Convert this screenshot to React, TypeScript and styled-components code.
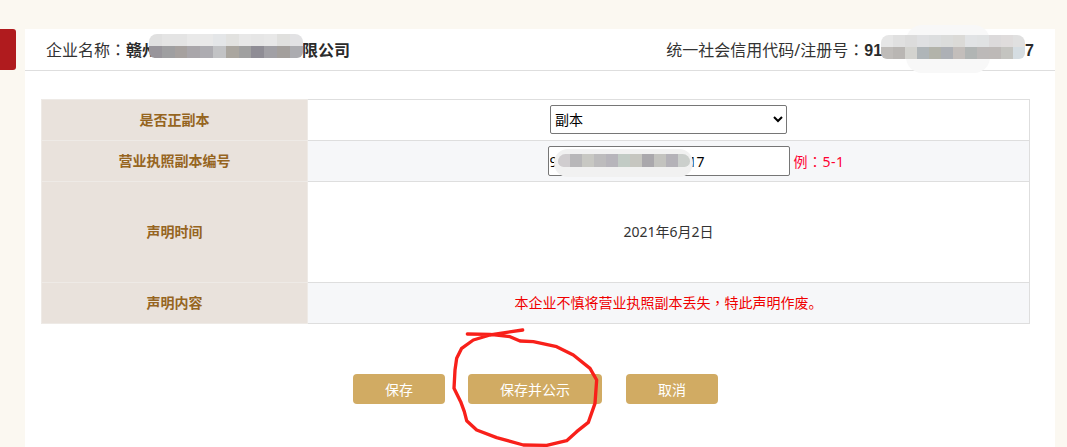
import React from "react";
import styled, { createGlobalStyle } from "styled-components";

const nameCells = [
  ["#e0e0e0", "#e4e4e4", "#e4e4e4", "#e9e9e9", "#e9e9e9", "#e4e6e8", "#e2e2e0", "#e8e8e8", "#e6e6e6", "#e8e8e8", "#e0e0de", "#e2e2e4"],
  ["#98959b", "#9f9fa1", "#a6a19f", "#a9a6aa", "#adacb1", "#c2c3c5", "#aaa69f", "#a0a0a0", "#8f8d95", "#a1a0a5", "#a39f9c", "#acacb0"],
];
const codeCells = [
  ["#e6e6e6", "#e0e0e0", "#dcdcdc", "#dfe0e2", "#dcdedf", "#dbdcdb", "#dbdad7", "#e1e3e5", "#e0e2e3", "#dcdadb", "#dfdcdc", "#e0e0e0"],
  ["#bfbcb9", "#b9b6b3", "#d3d3cf", "#afb5b8", "#b2b3aa", "#adb0b5", "#c3bebb", "#b1b5b4", "#bcb9b8", "#bdb9b7", "#c4c4c0", "#d5dde2"],
];
const inputCells = [
  ["#d0cdcf", "#b8b7b9", "#c8c8c3", "#bdbcbd", "#b7b5bb", "#c2cbc5", "#c6c6c0", "#aaa8ac", "#c3c3bf", "#b4b2b8", "#cbcfcc"],
];

export default function App() {
  return (
    <>
      <PageStyle />
      <Page>
        <SideTab />
        <Card>
          <Header>
            <HeaderItem>
              企业名称<Punct>：</Punct>
              <Strong>
                赣州
                <Hidden $width={144} />
                限公司
                <Mosaic $left={23} $top={-8} $cell={12.8} $height={12}>
                  <MosaicGrid cells={nameCells} />
                </Mosaic>
              </Strong>
            </HeaderItem>
            <HeaderItem>
              统一社会信用代码/注册号<Punct>：</Punct>
              <Strong>
                91
                <Hidden $width={143} />
                7
                <Smudge $left={42} $top={-17} $width={84} $height={48} $tone="#f8f8f8" />
                <Mosaic $left={17} $top={-7} $cell={12} $height={12}>
                  <MosaicGrid cells={codeCells} />
                </Mosaic>
              </Strong>
            </HeaderItem>
          </Header>
          <Body>
            <FormTable>
              <tbody>
                <tr>
                  <LabelCell>是否正副本</LabelCell>
                  <ValueCell>
                    <TypeSelect defaultValue="副本">
                      <option>正本</option>
                      <option>副本</option>
                    </TypeSelect>
                  </ValueCell>
                </tr>
                <tr>
                  <LabelCell>营业执照副本编号</LabelCell>
                  <ValueCell $shaded>
                    <InputRow>
                      <InputWrap>
                        <NumberInput readOnly value="9                                    17" />
                        <Smudge $left={6} $top={3} $width={139} $height={28} $tone="#f1f1f1" />
                        <Mosaic $left={10} $top={8} $cell={12} $height={13}>
                          <MosaicGrid cells={inputCells} />
                        </Mosaic>
                      </InputWrap>
                      <Hint>
                        例<Punct>：</Punct>5-1
                      </Hint>
                    </InputRow>
                  </ValueCell>
                </tr>
                <tr>
                  <LabelCell $tall>声明时间</LabelCell>
                  <ValueCell>2021年6月2日</ValueCell>
                </tr>
                <tr>
                  <LabelCell>声明内容</LabelCell>
                  <ValueCell $shaded $red>
                    本企业不慎将营业执照副本丢失<Punct>，</Punct>特此声明作废。
                  </ValueCell>
                </tr>
              </tbody>
            </FormTable>
            <Actions>
              <ActionButton $width={92}>保存</ActionButton>
              <ActionButton $width={134} $after={1}>
                保存并公示
              </ActionButton>
              <ActionButton $width={92}>取消</ActionButton>
            </Actions>
          </Body>
        </Card>
        <Scribble viewBox="0 0 1200 471">
          <path d="M578 120 L530 127 L480 135 L430 150 L395 175 L380 205 L375 240 L372 295 L392 335 L403 365 L410 392 L440 420 L500 443 L580 465 L650 466 L710 452 L740 425 L775 397 L795 340 L800 270 L780 235 L730 195 L680 170 L610 155 L570 153 L540 140 L480 133 L412 132" />
        </Scribble>
      </Page>
    </>
  );
}

function MosaicGrid({ cells }: { cells: string[][] }) {
  return (
    <>
      {cells.map((row, r) => (
        <MosaicRow key={r}>
          {row.map((colour, c) => (
            <MosaicCell key={c} $colour={colour} />
          ))}
        </MosaicRow>
      ))}
    </>
  );
}

const PageStyle = createGlobalStyle`
  html,
  body {
    margin: 0;
    padding: 0;
    height: 100%;
    overflow: hidden;
    background: #fbf8f1;
  }
  body {
    font-family: "Noto Sans", "Noto Sans CJK SC", sans-serif;
    font-size: 14px;
    color: #333;
  }
`;

const Page = styled.div`
  position: relative;
  display: flex;
  align-items: flex-start;
  height: 447px;
  padding: 29px 12px 0 0;
  box-sizing: border-box;
  overflow: hidden;
`;

const SideTab = styled.div`
  flex: none;
  width: 16px;
  height: 41px;
  margin-right: 9px;
  background: #b01b1e;
  border-radius: 0 3px 3px 0;
`;

const Card = styled.div`
  flex: 1;
  height: 418px;
  background: #fff;
`;

const Header = styled.div`
  display: flex;
  justify-content: space-between;
  align-items: center;
  height: 42px;
  padding: 0 21px 1px 21px;
  box-sizing: border-box;
  border-bottom: 1px solid #dedede;
  font-size: 16px;
  color: #333;
`;

const HeaderItem = styled.div`
  white-space: nowrap;
`;

/* full-width punctuation sits mid-cell in the reference */
const Punct = styled.span`
  font-family: "Noto Sans CJK TC", sans-serif;
`;

const Strong = styled.strong`
  position: relative;
  font-family: "Liberation Sans", "Noto Sans CJK SC", sans-serif;
  color: #2b2b2b;
`;

const Hidden = styled.span<{ $width: number }>`
  display: inline-block;
  width: ${(p) => p.$width}px;
`;

const Mosaic = styled.span<{ $left: number; $top: number; $cell: number; $height: number }>`
  position: absolute;
  left: ${(p) => p.$left}px;
  top: ${(p) => p.$top}px;
  display: flex;
  flex-direction: column;
  border-radius: 8px 8px 6px 6px;
  overflow: hidden;
  --cell: ${(p) => p.$cell}px;
  --row: ${(p) => p.$height}px;
`;

const MosaicRow = styled.span`
  display: flex;
`;

const MosaicCell = styled.span<{ $colour: string }>`
  width: var(--cell);
  height: var(--row);
  background: ${(p) => p.$colour};
`;

const Smudge = styled.span<{ $left: number; $top: number; $width: number; $height: number; $tone: string }>`
  position: absolute;
  left: ${(p) => p.$left}px;
  top: ${(p) => p.$top}px;
  width: ${(p) => p.$width}px;
  height: ${(p) => p.$height}px;
  background: ${(p) => p.$tone};
  border-radius: 16px;
`;

const Body = styled.div`
  padding: 28px 25px 0 16px;
`;

const FormTable = styled.table`
  width: 989px;
  border-collapse: collapse;
  table-layout: fixed;
`;

const LabelCell = styled.td<{ $tall?: boolean }>`
  width: 265px;
  height: ${(p) => (p.$tall ? 98 : 38)}px;
  padding: 0 0 2px;
  text-align: center;
  font-weight: bold;
  color: #96651f;
  background: #e9e2dc;
  border: 1px solid #eeeae6;
`;

const ValueCell = styled.td<{ $shaded?: boolean; $red?: boolean }>`
  padding: 0 0 2px;
  text-align: center;
  color: ${(p) => (p.$red ? "#f00000" : "#333")};
  background: ${(p) => (p.$shaded ? "#f6f7f9" : "#fff")};
  border: 1px solid #dedede;
`;

const TypeSelect = styled.select`
  display: block;
  width: 237px;
  height: 29px;
  margin: 0 auto;
  padding: 0;
  font: 14px "Noto Sans", "Noto Sans CJK SC", sans-serif;
  color: #000;
  background: #fff;
  border: 1px solid #767676;
  border-radius: 2px;
`;

const InputRow = styled.div`
  display: grid;
  grid-template-columns: 1fr auto 1fr;
  align-items: center;
  margin-top: 2px;
`;

const InputWrap = styled.div`
  grid-column: 2;
  position: relative;
  width: 242px;
  height: 30px;
`;

const NumberInput = styled.input`
  display: block;
  width: 100%;
  height: 100%;
  box-sizing: border-box;
  padding: 0 0 0 1px;
  font: 14px "Noto Sans", "Noto Sans CJK SC", sans-serif;
  color: #000;
  background: #fff;
  border: 1px solid #767676;
  border-radius: 2px;
  outline: none;
`;

const Hint = styled.span`
  grid-column: 3;
  margin-left: 4px;
  text-align: left;
  letter-spacing: 0.5px;
  color: #ff0033;
`;

const Actions = styled.div`
  display: flex;
  gap: 23px;
  margin-top: 50px;
  margin-left: 312px;
`;

const ActionButton = styled.button<{ $width: number; $after?: number }>`
  width: ${(p) => p.$width}px;
  height: 30px;
  margin-right: ${(p) => p.$after ?? 0}px;
  padding: 0;
  font: 14px "Noto Sans", "Noto Sans CJK SC", sans-serif;
  color: #fff;
  background: #d1ab63;
  border: none;
  border-radius: 4px;
`;

const Scribble = styled.svg`
  position: absolute;
  left: 330px;
  top: 290px;
  width: 400px;
  height: 157px;
  fill: none;
  stroke: #f8201a;
  stroke-width: 10;
  stroke-linejoin: round;
  stroke-linecap: round;
  pointer-events: none;
`;
